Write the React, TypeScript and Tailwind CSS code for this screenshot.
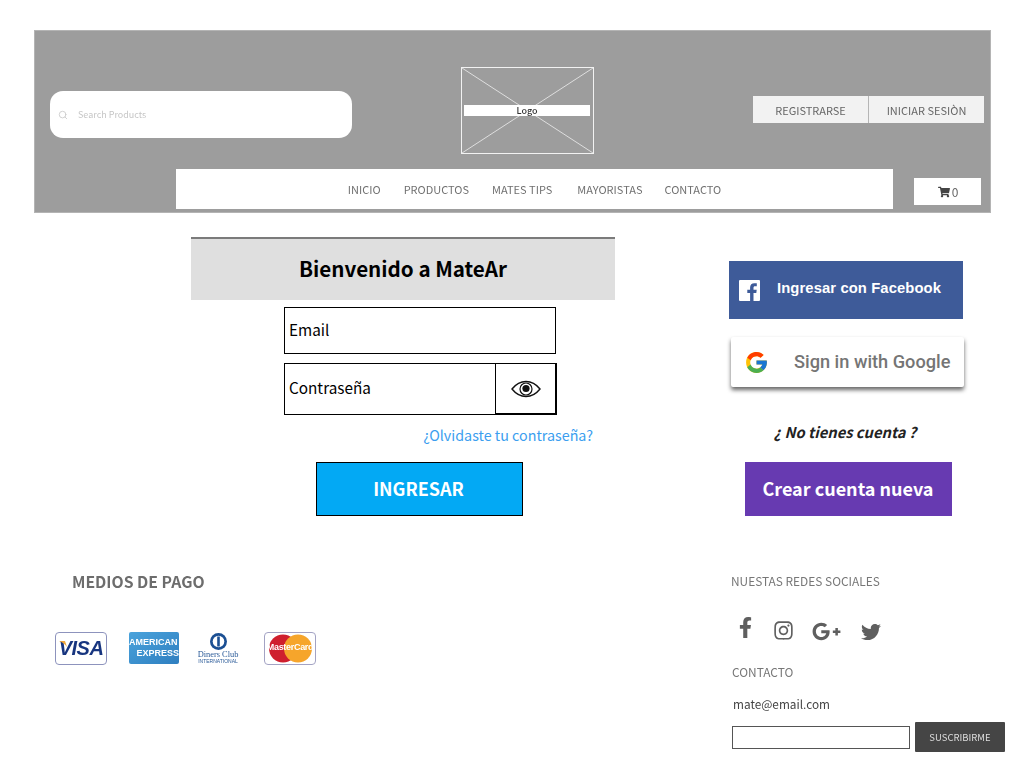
import { Search } from 'lucide-react';
import { FaFacebookF, FaGooglePlusG, FaInstagram, FaShoppingCart, FaTwitter } from 'react-icons/fa';
import { FcGoogle } from 'react-icons/fc';

const SOURCE = "font-['Noto_Sans_CJK_JP','Noto_Sans',sans-serif]";

const navItems = [
  { label: 'INICIO', margin: 'ml-0' },
  { label: 'PRODUCTOS', margin: 'ml-[23px]' },
  { label: 'MATES TIPS', margin: 'ml-[23px]' },
  { label: 'MAYORISTAS', margin: 'ml-[25px]' },
  { label: 'CONTACTO', margin: 'ml-[22px]' },
];

function Header() {
  return (
    <header className="h-[183px] bg-[#9d9d9d] flex flex-col border border-[#b4b4b4] blur-[0.4px]">
      <div className="flex h-[138px] shrink-0">
        <div className="ml-[15px] mt-[60px] w-[302px] h-[47px] bg-white rounded-[13px] flex items-center pl-[8px] shrink-0">
          <Search size={10} className="text-[#c9c9c9]" />
          <span className="ml-[10px] pt-[1px] text-[9px] text-[#c6c6c6]">Search Products</span>
        </div>
        <div className="relative ml-[109px] mt-[36px] w-[133px] h-[87px] border border-[#f2f2f2] shrink-0">
          <svg className="absolute inset-0 w-full h-full" viewBox="0 0 131 85" preserveAspectRatio="none">
            <path d="M0 0L131 85M131 0L0 85" stroke="#dedede" strokeWidth="1" fill="none" />
          </svg>
          <div className="absolute left-[2px] right-[3px] top-[37px] h-[11px] bg-white flex items-center justify-center text-[9px] leading-none font-medium text-[#333]">
            Logo
          </div>
        </div>
        <div className="ml-[159px] mt-[65px] flex h-[27px] text-[11px] text-[#666] shrink-0">
          <div className="w-[115px] pt-[1px] bg-[#f2f2f2] flex items-center justify-center">REGISTRARSE</div>
          <div className="w-[116px] pt-[1px] bg-[#f2f2f2] border-l border-[#b5b5b5] flex items-center justify-center">INICIAR SESIÒN</div>
        </div>
      </div>
      <div className="flex">
        <nav className="ml-[141px] w-[717px] h-[40px] bg-white flex items-center justify-center text-[11px] text-[#707070] shrink-0">
          {navItems.map(item => (
            <span key={item.label} className={item.margin}>{item.label}</span>
          ))}
        </nav>
        <div className="ml-[21px] mt-[9px] w-[67px] h-[27px] pt-[1px] pl-[1px] bg-white flex items-center justify-center gap-[2px] text-[12px] text-[#666] shrink-0">
          <FaShoppingCart size={12} className="text-[#444]" />
          <span>0</span>
        </div>
      </div>
    </header>
  );
}

function LoginForm() {
  return (
    <section className="ml-[157px] w-[424px] shrink-0">
      <div className="h-[63px] pb-[2px] bg-[#dfdfdf] border-t-2 border-[#7b7b7b] flex items-center justify-center text-[20.6px] font-bold text-black">
        Bienvenido a MateAr
      </div>
      <div className="ml-[93px] mt-[7px] w-[272px] h-[47px] pb-[2px] border border-black flex items-center pl-[4px] text-[15.3px] text-black">
        Email
      </div>
      <div className="ml-[93px] mt-[9px] w-[273px] h-[52px] border border-black flex items-center text-[15.3px] text-black">
        <span className="flex-1 pl-[4px] pb-[4px]">Contraseña</span>
        <div className="w-[61px] h-full border-l border-black border-r border-b flex items-center justify-center">
          <svg width="30" height="18" viewBox="0 0 30 18" fill="none">
            <path d="M1 9C5 4 10 1.5 15 1.5S25 4 29 9C25 14 20 16.5 15 16.5S5 14 1 9Z" stroke="#111" strokeWidth="1.4" />
            <circle cx="15" cy="9" r="6" stroke="#111" strokeWidth="1.2" />
            <circle cx="15" cy="8.5" r="3.6" fill="#111" />
          </svg>
        </div>
      </div>
      <div className="mr-[22px] mt-[9px] h-[22px] text-right text-[14.3px] leading-[22px] text-[#3b9eef]">
        ¿Olvidaste tu contraseña?
      </div>
      <div className="ml-[125px] mt-[16px] w-[207px] h-[54px] pb-[2px] pr-[2px] bg-[#03a9f4] border border-black flex items-center justify-center text-[18px] font-bold text-white">
        INGRESAR
      </div>
    </section>
  );
}

function SocialLogin() {
  return (
    <section className="ml-[114px] mt-[24px] w-[240px] shrink-0">
      <div className="w-[234px] h-[58px] bg-[#3e5b99] flex items-center pl-[10px] text-white">
        <svg width="21" height="21" viewBox="0 0 21 21" fill="#fff">
          <path d="M1 0H20a1 1 0 0 1 1 1V20a1 1 0 0 1-1 1H14.5V13H17.3L17.7 9.8H14.5V7.8C14.5 6.9 14.8 6.2 16.1 6.2H17.8V3.3C17.5 3.3 16.5 3.2 15.3 3.2C12.8 3.2 11.1 4.7 11.1 7.5V9.8H8.3V13H11.1V21H1a1 1 0 0 1-1-1V1a1 1 0 0 1 1-1Z" />
        </svg>
        <span className="ml-[17px] mb-[4px] font-['Liberation_Sans',sans-serif] font-bold text-[14.8px] tracking-[0.1px]">Ingresar con Facebook</span>
      </div>
      <div className="ml-[2px] mt-[18px] w-[233px] h-[50px] bg-white rounded-[2px] shadow-[0_3px_4px_rgba(0,0,0,0.6)] flex items-center pl-[13px]">
        <FcGoogle size={25} />
        <span className="ml-[25px] font-['Roboto',sans-serif] font-medium text-[18.2px] text-[#757575]">Sign in with Google</span>
      </div>
      <div className="mt-[33px] h-[24px] w-[232px] text-center text-[14.7px] leading-[24px] font-bold italic text-[#222]">
        ¿ No tienes cuenta ?
      </div>
      <div className="ml-[16px] mt-[18px] w-[207px] h-[54px] pb-[2px] pr-[1px] bg-[#673ab1] flex items-center justify-center text-[18px] font-bold text-white">
        Crear cuenta nueva
      </div>
    </section>
  );
}

function PaymentCards() {
  return (
    <div className="ml-[21px] mt-[37px] flex items-center h-[34px] blur-[0.5px]">
      <div className="relative w-[52px] h-[33px] bg-white border border-[#8d93bd] rounded-[4px] flex items-center justify-center font-['Liberation_Sans',sans-serif] font-bold italic text-[20px] tracking-[-0.5px] text-[#17357f]">
        <svg className="absolute left-[3px] top-[8px]" width="8" height="6" viewBox="0 0 8 6">
          <path d="M0 0H6L8 6C6 3 3 1 0 0Z" fill="#f0a73a" />
        </svg>
        VISA
      </div>
      <div className="ml-[22px] w-[50px] h-[32px] rounded-[2px] bg-gradient-to-br from-[#4aa3dc] to-[#2f7fc0] overflow-hidden flex flex-col justify-center font-['Liberation_Sans',sans-serif] font-bold text-[9px] leading-[11px] text-white">
        <span className="whitespace-nowrap">AMERICAN</span>
        <span className="text-right">EXPRESS</span>
      </div>
      <div className="ml-[18px] w-[42px] flex flex-col items-center">
        <svg width="17" height="17" viewBox="0 0 17 17">
          <circle cx="8.5" cy="8.5" r="8.5" fill="#1b4f93" />
          <circle cx="8.5" cy="8.5" r="5.8" fill="#fff" />
          <rect x="7.2" y="3.5" width="2.6" height="10" fill="#1b4f93" />
        </svg>
        <span className="font-['Liberation_Serif',serif] text-[8.4px] leading-[9px] text-[#2a5a98] whitespace-nowrap">Diners Club</span>
        <span className="font-['Liberation_Sans',sans-serif] text-[5px] leading-[5px] text-[#2a5a98] whitespace-nowrap">INTERNATIONAL</span>
      </div>
      <div className="relative ml-[25px] w-[52px] h-[33px] bg-white border border-[#a3a3c4] rounded-[4px] overflow-hidden">
        <svg className="absolute inset-0" width="50" height="31" viewBox="0 0 50 31">
          <circle cx="18" cy="15.5" r="14" fill="#cf1f2e" />
          <circle cx="33" cy="15.5" r="14" fill="#f6a52b" />
        </svg>
        <div className="absolute inset-0 flex items-center justify-center font-['Liberation_Sans',sans-serif] font-bold text-[9px] tracking-[-0.3px] text-white">
          MasterCard
        </div>
      </div>
    </div>
  );
}

function Footer() {
  return (
    <footer className="flex mt-[53px]">
      <div className="w-[697px] shrink-0">
        <h2 className="ml-[38px] mt-[1px] h-[24px] leading-[24px] text-[15.75px] font-bold text-[#6d6d6d] blur-[0.4px]">MEDIOS DE PAGO</h2>
        <PaymentCards />
      </div>
      <div className="w-[276px] shrink-0 blur-[0.35px]">
        <h3 className="mt-[2px] h-[20px] leading-[20px] text-[11.9px] text-[#777]">NUESTAS REDES SOCIALES</h3>
        <div className="mt-[25px] h-[30px] flex items-center text-[#5f5f5f]">
          <FaFacebookF size={21} className="ml-[4px] -mt-[7px]" />
          <FaInstagram size={21} className="ml-[17px] -mt-[1px]" />
          <FaGooglePlusG size={29} className="ml-[18px] mt-[1px]" />
          <FaTwitter size={20} className="ml-[20px] mt-[1px]" />
        </div>
        <div className="mt-[16px] ml-[1px] h-[20px] leading-[20px] text-[11.9px] text-[#777]">CONTACTO</div>
        <div className="mt-[12px] ml-[2px] h-[20px] leading-[20px] text-[11.8px] text-[#444]">mate@email.com</div>
        <div className="mt-[8px] flex items-start">
          <div className="ml-[1px] mt-[4px] w-[178px] h-[23px] bg-white border border-[#555]" />
          <div className="ml-[5px] w-[90px] h-[30px] bg-[#454545] rounded-[1px] flex items-center justify-center text-[9.5px] text-[#ddd]">SUSCRIBIRME</div>
        </div>
      </div>
    </footer>
  );
}

export default function App() {
  return (
    <div className={`${SOURCE} w-[1024px] h-[768px] overflow-hidden bg-white pl-[34px] pr-[33px] pt-[30px]`}>
      <Header />
      <main className="flex mt-[24px]">
        <LoginForm />
        <SocialLogin />
      </main>
      <Footer />
    </div>
  );
}
